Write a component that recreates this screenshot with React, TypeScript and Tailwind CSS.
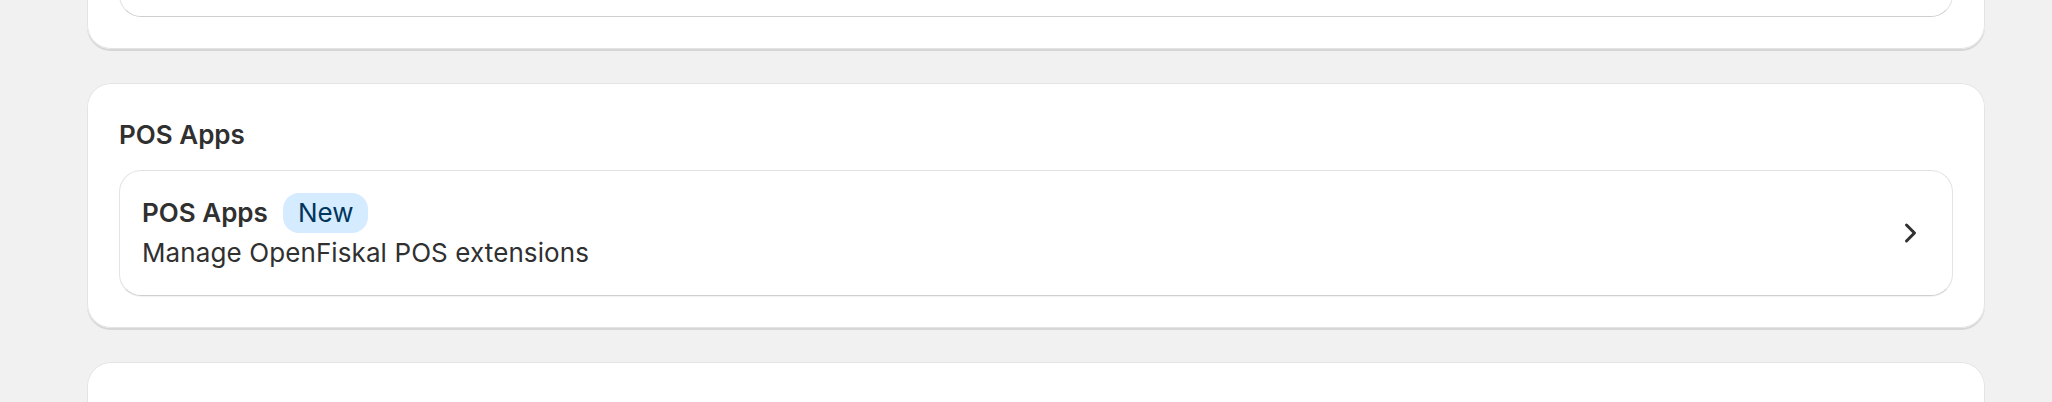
import React from "react";

const font = { fontFamily: "Inter, 'Noto Sans', sans-serif" };

function ChevronRight() {
  return (
    <svg viewBox="0 0 20 20" className="w-10 h-10 shrink-0 fill-[#303030]">
      <path d="M7.72 14.53a.75.75 0 0 1 0-1.06l3.47-3.47-3.47-3.47a.75.75 0 0 1 1.06-1.06l4 4a.75.75 0 0 1 0 1.06l-4 4a.75.75 0 0 1-1.06 0Z" />
    </svg>
  );
}

function Card({ children }: { children?: React.ReactNode }) {
  return (
    <div className="bg-white rounded-[24px] p-8 shadow-[inset_0_0_0_1px_#e4e4e4,0_2px_0_0_#d6d6d6] flex flex-col gap-[15px]">
      {children}
    </div>
  );
}

function SettingRow({ title, badge, description }: { title: string; badge?: string; description: string }) {
  return (
    <div className="flex items-center justify-between rounded-[22px] border border-[#e3e3e3] border-b-[#cfcfcf] shadow-[0_1px_0_0_rgba(26,26,26,0.05)] pl-[22px] pr-[22px] py-[22px]">
      <div className="flex flex-col">
        <div className="flex items-center gap-[15px] h-10">
          <span className="text-[26px] leading-[40px] font-semibold text-[#303030]">{title}</span>
          {badge && (
            <span className="h-10 px-[15px] rounded-[16px] bg-[#d5ebff] text-[#00365c] text-[26px] leading-[40px] font-normal">
              {badge}
            </span>
          )}
        </div>
        <p className="text-[26px] leading-[40px] tracking-[0.1px] text-[#303030]">{description}</p>
      </div>
      <ChevronRight />
    </div>
  );
}

export default function App() {
  return (
    <div className="w-full h-[402px] overflow-hidden bg-[#f1f1f1]" style={font}>
      <div className="ml-[87px] w-[1898px] -mt-[196px] flex flex-col gap-[34px]">
        {/* previous section, only its bottom edge shows */}
        <Card>
          <div className="h-10" />
          <div className="h-[126px] rounded-[22px] border border-[#e3e3e3] border-b-[#cfcfcf]" />
        </Card>

        <Card>
          <h2 className="text-[26px] leading-[40px] font-semibold text-[#303030]">POS Apps</h2>
          <SettingRow title="POS Apps" badge="New" description="Manage OpenFiskal POS extensions" />
        </Card>

        {/* next section, only its top edge shows */}
        <Card>
          <div className="h-[200px]" />
        </Card>
      </div>
    </div>
  );
}
